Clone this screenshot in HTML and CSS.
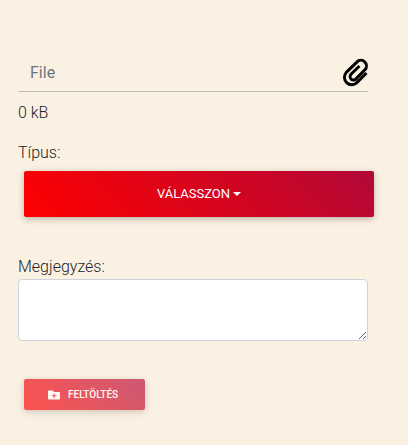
FILE: index.html
```html
<!DOCTYPE html>
<html lang="hu">
<head>
<meta charset="utf-8">
<meta name="viewport" content="width=device-width, initial-scale=1">
<title>Feltöltés</title>
<link rel="stylesheet" href="styles.css">
</head>
<body>
<form class="upload">
  <div class="file-field">
    <input class="file-name" type="text" placeholder="File" aria-label="File">
    <button class="attach" type="button" aria-label="File">
      <svg class="clip" viewBox="0 0 26 30" aria-hidden="true"><path d="M24.500 15 L15.300 24.200 A6.900 6.900 0 0 1 4.300 14.400 L14.800 4.100 A5.400 5.400 0 0 1 22.900 11.800 L14 20.900 A3.300 3.300 0 0 1 9 16.300 L17.400 8"/></svg>
    </button>
  </div>
  <p class="size">0 kB</p>
  <div class="group">
    <label for="type">Típus:</label>
    <button class="btn btn-block" id="type" type="button">Válasszon<span class="caret"></span></button>
  </div>
  <div class="group">
    <label for="note">Megjegyzés:</label>
    <textarea class="note" id="note" rows="2"></textarea>
  </div>
  <button class="btn btn-small" type="submit" disabled>
    <svg class="folder" viewBox="0 0 12 10" aria-hidden="true"><path fill-rule="evenodd" d="M1 0.500H4.500L6 2H11Q12 2 12 3V8.500Q12 9.500 11 9.500H1Q0 9.500 0 8.500V1.500Q0 0.500 1 0.500ZM5.600 3.500V5.300H3.800V6.300H5.600V8H6.600V6.300H8.400V5.300H6.600V3.500Z"/></svg>
    Feltöltés
  </button>
</form>
</body>
</html>
```

FILE: styles.css
```css
* {
  box-sizing: border-box;
}

body {
  margin: 0;
  background: #fbf1e2;
  color: #212529;
  font: 300 16px/24px Roboto, "Liberation Sans", sans-serif;
}

.upload {
  padding: 54px 40px 28px 18px;
}

.file-field {
  display: flex;
  align-items: center;
  border-bottom: 1px solid #bdbdbd;
}

.file-name {
  flex: 1;
  min-width: 0;
  height: 37px;
  padding: 6px 12px;
  border: 0;
  background: transparent;
  color: #495057;
  font: 400 16px/24px Roboto, "Liberation Sans", sans-serif;
}

.file-name::placeholder {
  color: #6c757d;
  opacity: 1;
}

.attach {
  padding: 0;
  border: 0;
  background: none;
}

.clip {
  display: block;
  width: 26px;
  height: 30px;
  fill: none;
  stroke: #000;
  stroke-width: 3;
}

.size {
  margin: 9px 0 16px;
}

.group {
  margin-bottom: 38px;
}

.group label {
  display: block;
}

.btn {
  display: flex;
  align-items: center;
  justify-content: center;
  margin: 6px;
  border: 0;
  border-radius: 2px;
  background: linear-gradient(45deg, #f00, #b20838);
  box-shadow: 0 2px 5px rgba(0, 0, 0, 0.16), 0 2px 10px rgba(0, 0, 0, 0.12);
  color: #fff;
  font: 400 13px/20px Roboto, "Liberation Sans", sans-serif;
  text-transform: uppercase;
}

.btn-block {
  width: 100%;
  padding: 13px 24px;
}

.group .btn {
  margin-bottom: 38px;
}

.group:has(.btn) {
  margin-bottom: 0;
}

.caret {
  margin-left: 3px;
  border: 4px solid transparent;
  border-top-color: #fff;
  border-bottom: 0;
}

.note {
  display: block;
  width: 100%;
  padding: 6px 12px;
  border: 1px solid #ced4da;
  border-radius: 4px;
  background: #fff;
  color: #495057;
  font: 400 16px/24px Roboto, "Liberation Sans", sans-serif;
}

.btn-small {
  gap: 8px;
  padding: 8px 27px 8px 24px;
  font-size: 10px;
  font-weight: 500;
  line-height: 15px;
  opacity: 0.65;
}

.folder {
  width: 12px;
  height: 10px;
  fill: #fff;
}
```
